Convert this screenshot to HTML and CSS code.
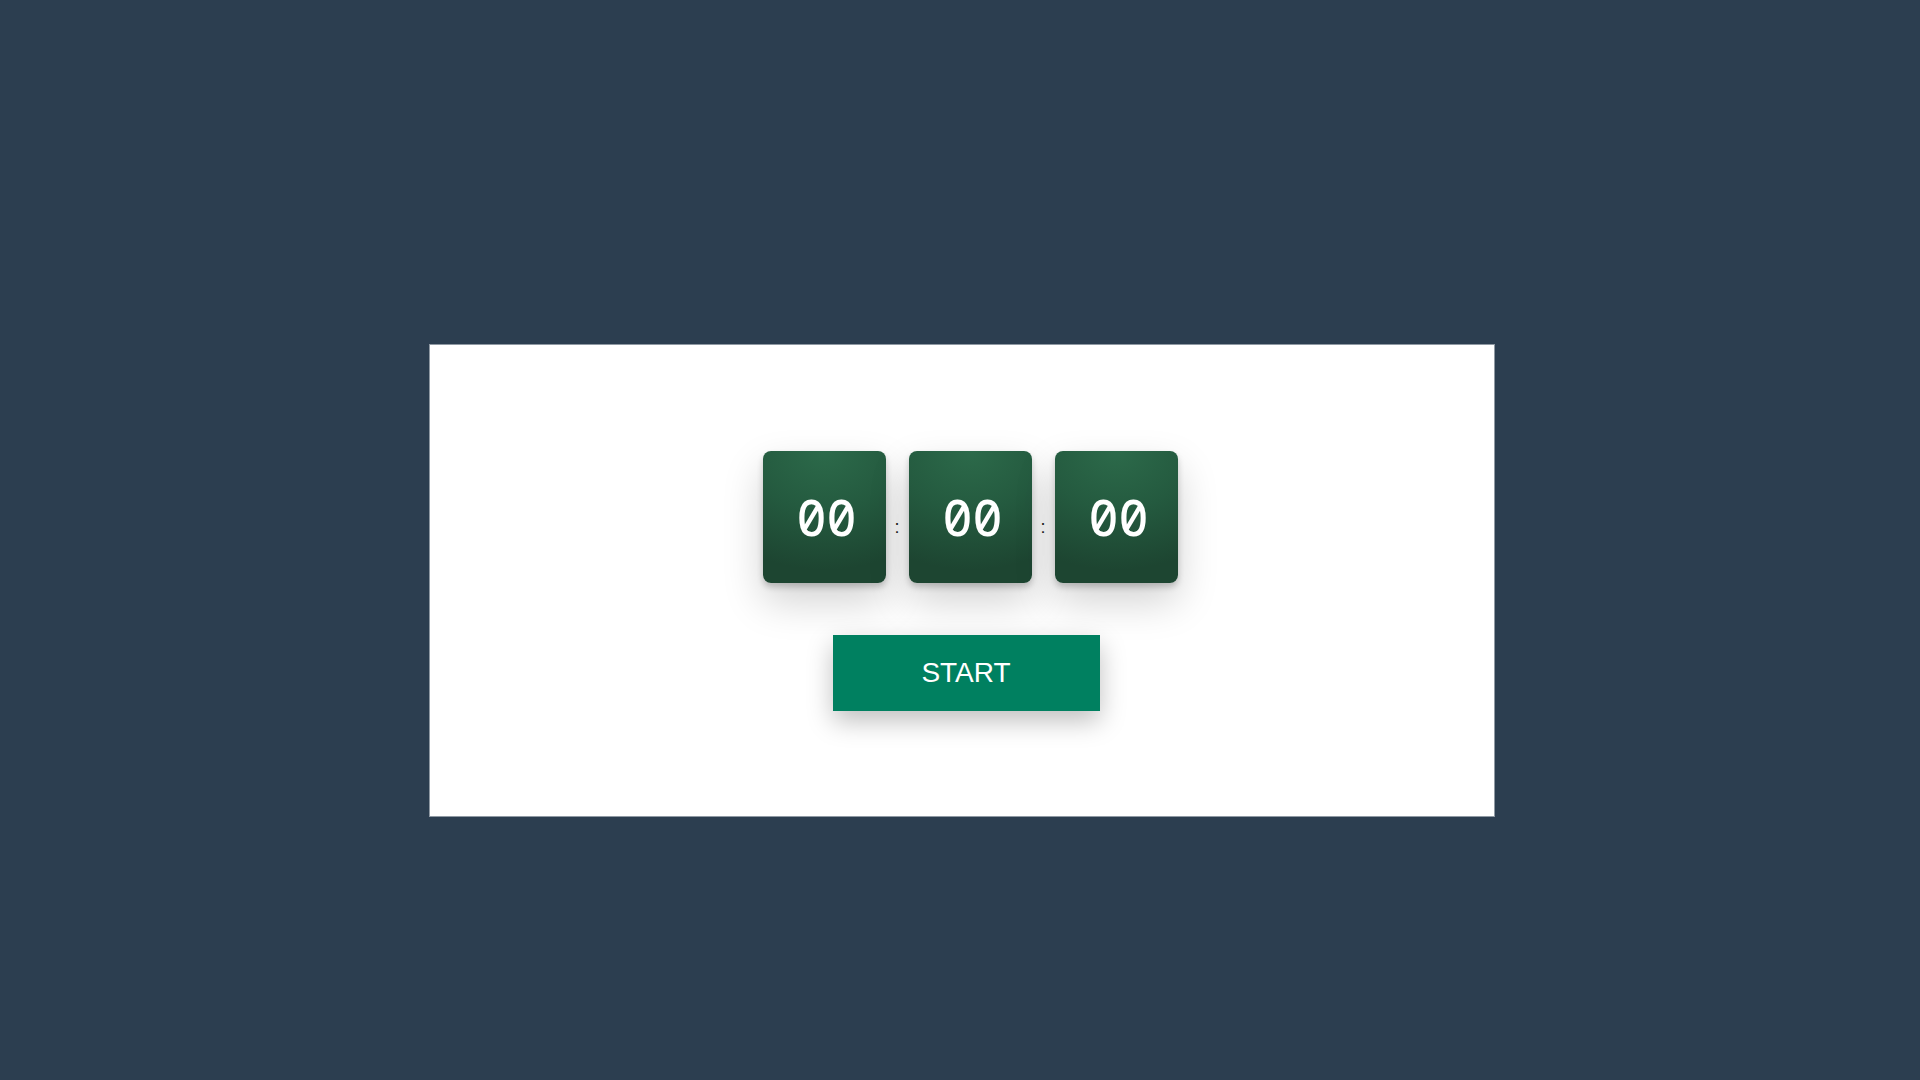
FILE: index.html
```
<!DOCTYPE html>
<html lang="en">
<head>
<meta charset="utf-8">
<title>Timer</title>
<link rel="stylesheet" href="styles.css">
</head>
<body>
<main class="card">
  <div class="clock">
    <div class="unit"><span class="digits">00</span></div>
    <span class="sep">:</span>
    <div class="unit"><span class="digits">00</span></div>
    <span class="sep">:</span>
    <div class="unit"><span class="digits">00</span></div>
  </div>
  <button class="start" type="button">START</button>
</main>
</body>
</html>
```
FILE: styles.css
```
html, body {
  margin: 0;
  height: 100%;
}
body {
  background: #2c3e50;
  font-family: "Liberation Sans", Arial, sans-serif;
  display: flex;
  justify-content: center;
  align-items: flex-start;
  padding-left: 4px;
  box-sizing: border-box;
}
.card {
  margin-top: 344px;
  width: 1066px;
  height: 473px;
  box-sizing: border-box;
  background: #fff;
  border: 1px solid #8f99a3;
  display: flex;
  flex-direction: column;
  align-items: center;
  padding-top: 106px;
}
.clock {
  display: flex;
  align-items: center;
  margin-left: 16px;
}
.unit {
  width: 123px;
  height: 132px;
  border-radius: 8px;
  background: radial-gradient(ellipse 120% 90% at 50% 0%, #2c6a4a 0%, #245a3f 50%, #1d4531 100%);
  box-shadow: 0 4px 6px rgba(0,0,0,0.2), 0 18px 40px rgba(0,0,0,0.18);
  display: flex;
  align-items: center;
  justify-content: center;
}
.digits {
  font-family: "Noto Sans Mono", "DejaVu Sans Mono", monospace;
  font-size: 50px;
  font-weight: 500;
  color: #fff;
  padding-left: 5px;
  line-height: 1;
}
.sep {
  width: 23px;
  text-align: center;
  font-size: 18px;
  color: #222;
  margin-top: 20px;
}
.start {
  margin-top: 52px;
  margin-left: 8px;
  width: 267px;
  height: 76px;
  border: none;
  background: #008060;
  color: #fff;
  font-family: "Liberation Sans", Arial, sans-serif;
  font-size: 28px;
  box-shadow: 0 10px 24px rgba(0,0,0,0.25);
  cursor: pointer;
}
```
